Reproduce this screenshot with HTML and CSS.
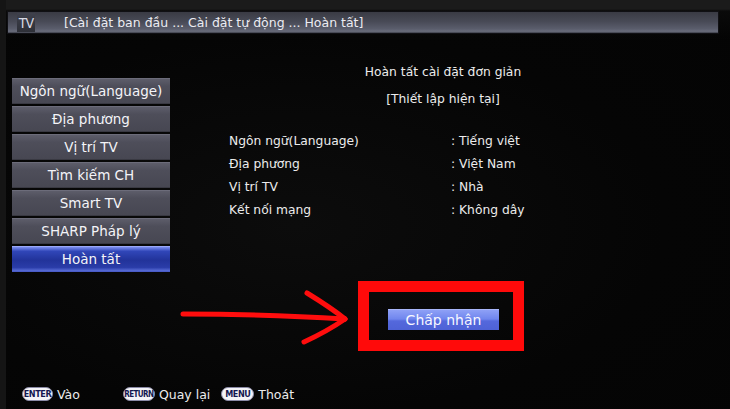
FILE: index.html
```html
<!DOCTYPE html>
<html>
<head>
  <meta charset="utf-8">
  <link rel="stylesheet" href="styles.css">
</head>
<body>
  <div class="screen">
    <div class="topbar">
      <div class="tv-logo">TV</div>
      <div class="breadcrumb">[Cài đặt ban đầu ... Cài đặt tự động ... Hoàn tất]</div>
    </div>

    <div class="main">
      <div class="menu">
        <div class="menu-item">Ngôn ngữ(Language)</div>
        <div class="menu-item">Địa phương</div>
        <div class="menu-item">Vị trí TV</div>
        <div class="menu-item">Tìm kiếm CH</div>
        <div class="menu-item">Smart TV</div>
        <div class="menu-item">SHARP Pháp lý</div>
        <div class="menu-item active">Hoàn tất</div>
      </div>

      <div class="content">
        <div class="title">Hoàn tất cài đặt đơn giản</div>
        <div class="subtitle">[Thiết lập hiện tại]</div>

        <div class="settings">
          <div class="row"><span class="label">Ngôn ngữ(Language)</span><span class="value">: Tiếng việt</span></div>
          <div class="row"><span class="label">Địa phương</span><span class="value">: Việt Nam</span></div>
          <div class="row"><span class="label">Vị trí TV</span><span class="value">: Nhà</span></div>
          <div class="row"><span class="label">Kết nối mạng</span><span class="value">: Không dây</span></div>
        </div>

        <div class="highlight">
          <div class="accept-btn">Chấp nhận</div>
        </div>
      </div>
    </div>

    <div class="legend">
      <span class="key key-enter">ENTER</span><span class="key-label label-enter">Vào</span>
      <span class="key key-return">RETURN</span><span class="key-label label-return">Quay lại</span>
      <span class="key key-menu">MENU</span><span class="key-label">Thoát</span>
    </div>

    <!-- hand-drawn arrow pointing at the accept button -->
    <svg class="arrow" width="172" height="60" viewBox="0 0 172 60">
      <path d="M3 26 C 60 26, 120 28, 165 31" />
      <path d="M127 5 C 140 13, 154 22, 165 31" />
      <path d="M165 31 C 152 40, 137 48, 124 54" />
    </svg>
  </div>
</body>
</html>
```

FILE: styles.css
```css
* {
  margin: 0;
  padding: 0;
  box-sizing: border-box;
}

body {
  width: 730px;
  height: 409px;
  background: #050505;
  font-family: 'DejaVu Sans', 'Noto Sans', sans-serif;
  color: #f2f2f2;
  overflow: hidden;
}

.screen {
  position: relative;
  width: 730px;
  height: 409px;
  display: flex;
  flex-direction: column;
  background:
    linear-gradient(180deg, #1b1b1b 0px, #1b1b1b 9px, #0a0a0a 11px, transparent 40px),
    radial-gradient(ellipse at 40% 55%, #0c0c0c 0%, #050505 60%, #040404 100%);
  border-left: 6px solid #151515;
}

.topbar {
  height: 23px;
  margin: 11px 11px 0 1px;
  display: flex;
  align-items: center;
  border: 1px solid #101014;
  background: linear-gradient(180deg, #3a3b44 0%, #484a56 45%, #5a5d6c 80%, #6a6d7c 92%, #3c3e48 100%);
}

.tv-logo {
  width: 18px;
  height: 19px;
  margin-left: 9px;
  display: flex;
  align-items: center;
  justify-content: center;
  background: linear-gradient(180deg, #3f414c, #2e3038);
  font-family: 'DejaVu Sans Condensed', 'DejaVu Sans', sans-serif;
  font-size: 14px;
  letter-spacing: -1px;
  color: #d8dae4;
}

.breadcrumb {
  margin-left: 29px;
  font-size: 12.5px;
  color: #ececf2;
  white-space: nowrap;
}

.main {
  display: flex;
  align-items: flex-start;
}

.menu {
  width: 158px;
  margin: 44px 0 0 6px;
  display: flex;
  flex-direction: column;
  gap: 2px;
}

.menu-item {
  height: 26px;
  display: flex;
  align-items: center;
  justify-content: center;
  font-size: 13.5px;
  white-space: nowrap;
  color: #f4f4f8;
  background: linear-gradient(180deg, #5d5d6a 0%, #4e4e5a 30%, #474752 100%);
  border-top: 1px solid #6c6c7a;
  border-bottom: 1px solid #393942;
}

.menu-item.active {
  background: linear-gradient(180deg, #7c8ef0 0%, #3046b8 18%, #22339a 55%, #2a3ca8 85%, #5a6ed8 100%);
  border-top: 1px solid #9aa8f8;
  border-bottom: 1px solid #4a5cc8;
}

.content {
  flex: 1;
  margin-top: 30px;
  margin-right: 14px;
  display: flex;
  flex-direction: column;
  align-items: center;
  font-size: 12.3px;
  color: #ececec;
}

.title {
  line-height: 16px;
}

.subtitle {
  margin-top: 11px;
  line-height: 16px;
}

.settings {
  align-self: stretch;
  margin-top: 22px;
  padding-left: 59px;
}

.row {
  display: flex;
  height: 23px;
  align-items: center;
}

.label {
  width: 222px;
}

.highlight {
  margin-top: 60px;
  margin-right: 4px;
  width: 166px;
  height: 70px;
  border: 11px solid #ff0a0a;
  padding: 17px 15px 0 19px;
}

.accept-btn {
  width: 111px;
  height: 21px;
  display: flex;
  align-items: center;
  justify-content: center;
  font-size: 14px;
  color: #f8f8ff;
  background: linear-gradient(180deg, #8ea0f6 0%, #7086ee 45%, #5468dc 55%, #4e62d6 100%);
  border-top: 1px solid #a8b6fa;
}

.legend {
  margin-top: auto;
  margin-bottom: 8px;
  padding-left: 16px;
  display: flex;
  align-items: center;
  height: 14px;
  font-size: 12.5px;
  color: #ececec;
}

.key {
  height: 14px;
  display: flex;
  align-items: center;
  justify-content: center;
  border-radius: 7px;
  background: #f4f4f8;
  border: 1px solid #8a8aa6;
  color: #141850;
  font-family: 'DejaVu Sans Condensed', 'DejaVu Sans', sans-serif;
  font-weight: bold;
  font-size: 9px;
  letter-spacing: -0.4px;
  white-space: nowrap;
}

.key-enter {
  width: 31px;
}

.key-return {
  width: 32px;
  font-size: 8px;
  letter-spacing: -0.6px;
}

.key-menu {
  width: 33px;
}

.key-label {
  margin-left: 4px;
}

.label-enter {
  margin-right: 43px;
}

.label-return {
  margin-right: 11px;
}

.arrow {
  position: absolute;
  left: 174px;
  top: 288px;
  fill: none;
  stroke: #ff0d0d;
  stroke-width: 5;
  stroke-linecap: round;
}
```
